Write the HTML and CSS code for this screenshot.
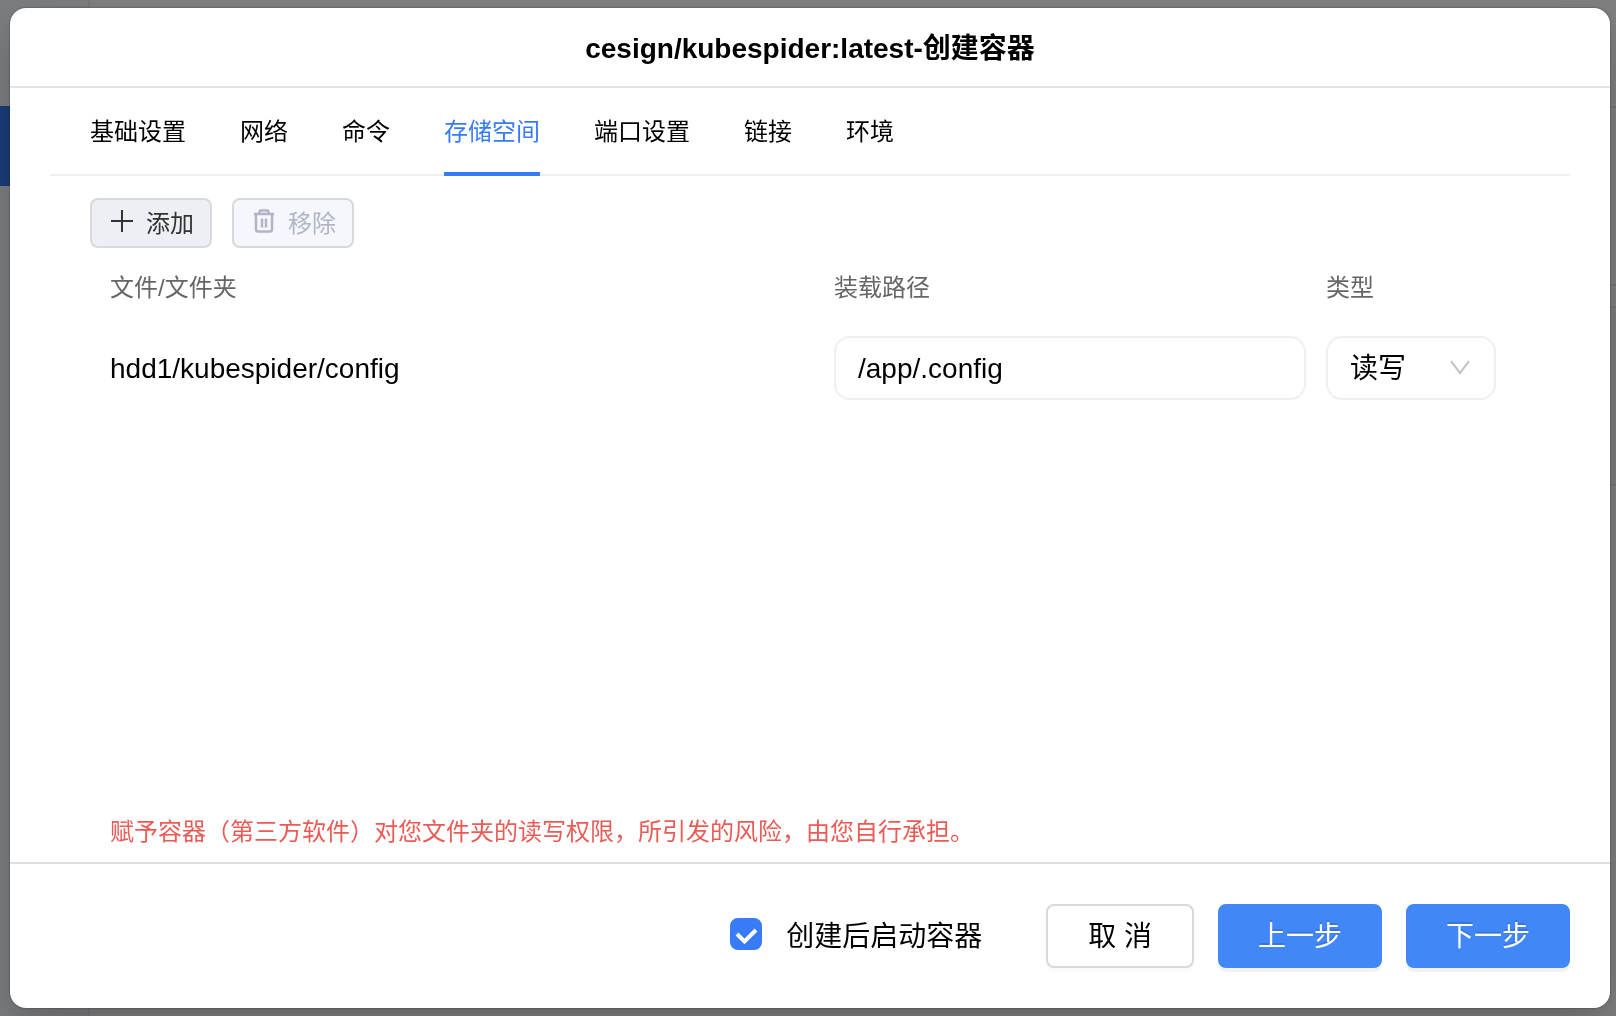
FILE: index.html
```html
<!DOCTYPE html>
<html lang="zh-CN">
<head>
  <meta charset="utf-8">
  <meta name="viewport" content="width=device-width, initial-scale=1">
  <title>cesign/kubespider:latest-创建容器</title>
  <link rel="stylesheet" href="styles.css">
</head>
<body>
  <div class="app" aria-hidden="true">
    <div class="app-sidebar"><div class="app-nav-active"></div></div>
    <div class="app-main">
      <div class="app-topbar"></div>
      <div class="app-toolbar"></div>
      <div class="app-row-head"></div>
      <div class="app-row"></div>
    </div>
  </div>

  <div class="overlay">
    <section class="dialog" role="dialog" aria-modal="true" aria-labelledby="dialog-title">
      <header class="dialog-header">
        <h1 class="dialog-title" id="dialog-title">cesign/kubespider:latest-创建容器</h1>
      </header>

      <div class="dialog-body">
        <nav class="tabs">
          <a class="tab" href="#basic">基础设置</a>
          <a class="tab" href="#network">网络</a>
          <a class="tab" href="#command">命令</a>
          <a class="tab tab-active" href="#storage" aria-current="page">存储空间</a>
          <a class="tab" href="#ports">端口设置</a>
          <a class="tab" href="#links">链接</a>
          <a class="tab" href="#env">环境</a>
        </nav>

        <div class="panel">
          <div class="toolbar">
            <button class="tool" type="button">
              <svg class="tool-icon" viewBox="0 0 24 24" aria-hidden="true"><path d="M12 1v22M1 12h22" stroke-width="2"/></svg>
              添加
            </button>
            <button class="tool" type="button" disabled>
              <svg class="tool-icon" viewBox="0 0 24 24" aria-hidden="true"><path d="M2 5h20M7 5L8 1.500h8L17 5M4 5v15.500q0 2 2 2h12q2 0 2-2V5M10 9.500v9M14 9.500v9" stroke-width="2.500"/></svg>
              移除
            </button>
          </div>

          <table class="mounts">
            <colgroup><col><col class="col-path"><col class="col-type"></colgroup>
            <thead>
              <tr><th>文件/文件夹</th><th>装载路径</th><th>类型</th></tr>
            </thead>
            <tbody>
              <tr>
                <td>hdd1/kubespider/config</td>
                <td><input class="field" type="text" value="/app/.config" aria-label="装载路径"></td>
                <td>
                  <div class="select">
                    <select class="field" aria-label="类型">
                      <option>读写</option>
                      <option>只读</option>
                    </select>
                    <svg class="chevron" viewBox="0 0 22 16" aria-hidden="true"><path d="M2 1l9 12 9-12"/></svg>
                  </div>
                </td>
              </tr>
            </tbody>
          </table>

          <p class="warning">赋予容器（第三方软件）对您文件夹的读写权限，所引发的风险，由您自行承担。</p>
        </div>
      </div>

      <footer class="dialog-footer">
        <label class="check">
          <input class="check-input" type="checkbox" checked>
          <svg class="check-mark" viewBox="0 0 32 32" aria-hidden="true"><path d="M7 16l7.500 7.500L26 12"/></svg>
          <span class="check-label">创建后启动容器</span>
        </label>
        <button class="button" type="button">取 消</button>
        <button class="button button-primary" type="button">上一步</button>
        <button class="button button-primary" type="button">下一步</button>
      </footer>
    </section>
  </div>
</body>
</html>
```

FILE: styles.css
```css
* {
  box-sizing: border-box;
}

body {
  margin: 0;
  background: #7f7f7f;
  color: #000;
  font-family: "Liberation Sans", "Noto Sans CJK SC", sans-serif;
  font-size: 28px;
  line-height: 40px;
}

button,
input,
select {
  margin: 0;
  font: inherit;
  color: inherit;
}

/* Dimmed page behind the dialog */
.app {
  display: flex;
  height: 100vh;
}

.app-sidebar {
  width: 90px;
  padding-top: 106px;
  border-right: 2px solid #777;
  background: #7c7d7f;
}

.app-nav-active {
  height: 80px;
  background: #1b3c79;
}

.app-main {
  flex: 1;
}

.app-topbar {
  height: 108px;
  border-bottom: 2px solid #747474;
}

.app-toolbar {
  height: 178px;
  border-bottom: 2px solid #747474;
}

.app-row-head {
  height: 22px;
  border-bottom: 2px solid #747474;
}

.app-row {
  height: 178px;
  border-bottom: 2px solid #747474;
  background: #7c7c7c;
}

.overlay {
  position: fixed;
  inset: 0;
  display: flex;
  padding: 8px 6px 8px 10px;
}

.dialog {
  flex: 1;
  display: flex;
  flex-direction: column;
  border-radius: 16px;
  background: #fff;
  box-shadow: 0 0 2px rgba(0, 0, 0, 0.5), 0 20px 40px rgba(0, 0, 0, 0.2);
}

.dialog-header {
  padding: 22px 20px 18px;
  border-bottom: 2px solid #e4e4e4;
}

.dialog-title {
  margin: 0;
  font-size: 28px;
  line-height: 38px;
  font-weight: 700;
  text-align: center;
}

.dialog-body {
  flex: 1;
  display: flex;
  flex-direction: column;
  padding: 0 40px;
}

.tabs {
  display: flex;
  gap: 54px;
  padding: 0 40px;
  box-shadow: inset 0 -2px #f0f0f0;
}

.tab {
  padding: 26px 0 22px;
  border-bottom: 4px solid transparent;
  font-size: 24px;
  line-height: 36px;
  color: inherit;
  text-decoration: none;
}

.tab-active {
  border-color: #377cf6;
  color: #377cf6;
}

.panel {
  flex: 1;
  display: flex;
  flex-direction: column;
  padding: 22px 40px 10px;
}

.toolbar {
  display: flex;
  gap: 20px;
}

.tool {
  display: flex;
  align-items: center;
  gap: 12px;
  height: 50px;
  padding: 2px 16px 0 18px;
  border: 2px solid #d9d9d9;
  border-radius: 8px;
  background: #eeeff4;
  font-size: 24px;
  line-height: 36px;
  color: #333;
}

.tool:disabled {
  background: #f4f8fc;
  color: #b2b4c6;
}

.tool-icon {
  width: 24px;
  height: 24px;
  margin-bottom: 6px;
  fill: none;
  stroke: currentColor;
}

.mounts {
  width: 100%;
  table-layout: fixed;
  border-collapse: collapse;
}

.col-path {
  width: 492px;
}

.col-type {
  width: 204px;
}

.mounts th,
.mounts td {
  height: 80px;
  padding: 0 20px 0 0;
  text-align: left;
  vertical-align: middle;
}

.mounts th:first-child,
.mounts td:first-child {
  padding-left: 20px;
}

.mounts td:first-child {
  padding-top: 2px;
}

.mounts th {
  font-size: 24px;
  font-weight: 400;
  color: #666;
}

.field {
  display: block;
  width: 100%;
  height: 64px;
  padding: 2px 22px 0;
  border: 2px solid #efefef;
  border-radius: 16px;
  background: #fff;
  appearance: none;
}

.select {
  display: grid;
  grid-template-columns: 170px;
  align-items: center;
}

.select .field,
.chevron {
  grid-area: 1 / 1;
}

.chevron {
  justify-self: end;
  width: 22px;
  height: 16px;
  margin-right: 25px;
  fill: none;
  stroke: #bfbfbf;
  stroke-width: 2;
  pointer-events: none;
}

.warning {
  margin: auto 0 0;
  padding: 0 20px;
  font-size: 24px;
  color: #eb5a54;
}

.dialog-footer {
  display: flex;
  justify-content: flex-end;
  align-items: center;
  gap: 24px;
  padding: 40px;
  border-top: 2px solid #dedede;
}

.check {
  display: grid;
  grid-template-columns: 32px auto;
  column-gap: 24px;
  align-items: center;
  margin-right: 40px;
}

.check-label {
  padding-top: 2px;
}

.check-input {
  grid-area: 1 / 1;
  width: 32px;
  height: 32px;
  margin-bottom: 4px;
  border: 2px solid #d9d9d9;
  border-radius: 8px;
  appearance: none;
}

.check-input:checked {
  border-color: #377cf6;
  background: #377cf6;
}

.check-mark {
  grid-area: 1 / 1;
  width: 32px;
  height: 32px;
  margin-bottom: 4px;
  fill: none;
  stroke: #fff;
  stroke-width: 4;
  pointer-events: none;
}

.button {
  height: 64px;
  padding: 2px 40px 0;
  border: 2px solid #d9d9d9;
  border-radius: 8px;
  background: #fff;
  box-shadow: 0 4px rgba(0, 0, 0, 0.02);
}

.button-primary {
  padding: 2px 38px 0;
  border-color: #4287f8;
  background: #4287f8;
  box-shadow: 0 4px rgba(0, 0, 0, 0.05);
  color: #fff;
  text-shadow: 0 -2px rgba(0, 0, 0, 0.12);
}
```
